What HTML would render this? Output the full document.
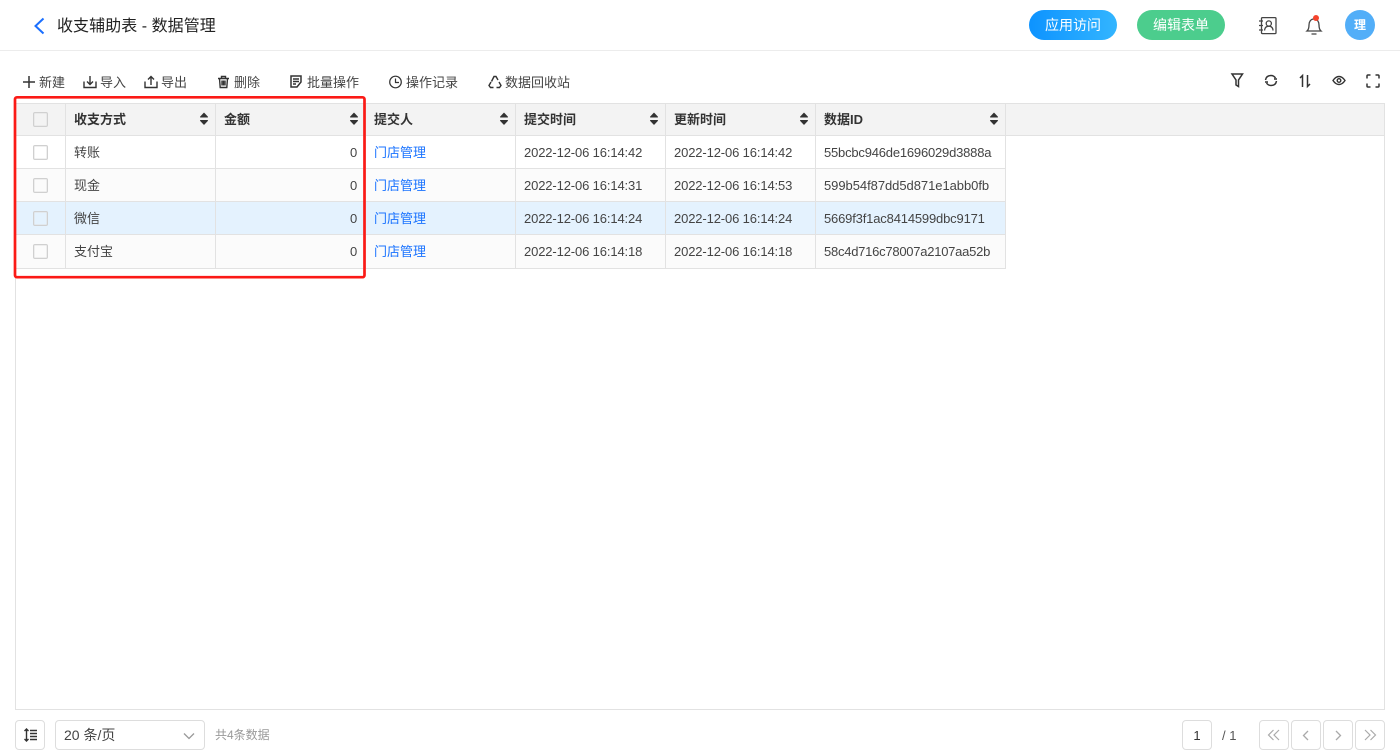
<!DOCTYPE html>
<html lang="zh-CN"><head><meta charset="utf-8"><title>收支辅助表 - 数据管理</title>
<style>
*{box-sizing:border-box;margin:0;padding:0}
html,body{width:1400px;height:755px;overflow:hidden;background:#fff}
body{position:relative;font-family:"Liberation Sans","Noto Sans CJK SC",sans-serif;font-size:13px;color:#333}
.a{position:absolute;white-space:nowrap}
svg{position:absolute;overflow:visible}
.tb{top:74px;line-height:18px;color:#444}
.r{position:absolute;left:15px;width:991px;border-bottom:1px solid #e2e2e2}
.c{position:absolute;top:103px;width:1px;height:166px;background:#e2e2e2}
.cb{position:absolute;left:33px;width:15px;height:15px;border:1px solid #d0d0d0;border-radius:2px;background:transparent;box-shadow:inset 0 0 0 .5px #e0e0e0}
.th{top:111px;line-height:18px;font-weight:700;color:#333}
.td{line-height:18px;color:#444}
.num{letter-spacing:-.13px}
.lnk{color:#1a73ff}
.btn{position:absolute;top:720px;height:30px;border:1px solid #ddd;border-radius:4px;background:#fff}
</style></head><body>

<svg style="left:33px;top:17px" width="14" height="18" fill="none" stroke="#1a6fff" stroke-width="2"><path d="M10.500 1.500L2.500 9l8 7.500"/></svg>
<div class="a" style="left:57px;top:16px;font-size:16px;line-height:22px;color:#222;letter-spacing:.05px">收支辅助表 - 数据管理</div>

<div class="a" style="left:1029px;top:10px;width:88px;height:30px;border-radius:15px;background:linear-gradient(90deg,#0d93ff,#33b5ff);color:#fff;font-size:14px;line-height:30px;text-align:center">应用访问</div>
<div class="a" style="left:1137px;top:10px;width:88px;height:30px;border-radius:15px;background:#4ccd8d;color:#fff;font-size:14px;line-height:30px;text-align:center">编辑表单</div>

<svg style="left:1259px;top:17px" width="18" height="18" fill="none" stroke="#444" stroke-width="1.300"><rect x="2.500" y="0.600" width="14.500" height="16" rx="1"/><circle cx="9.800" cy="6.500" r="2.600"/><path d="M5.500 13.500c.3-3 2-4.300 4.300-4.300s4 1.300 4.300 4.300M0 4h4M0 8.500h4M0 13h4"/></svg>
<svg style="left:1306px;top:15px" width="16" height="21" fill="none" stroke="#444" stroke-width="1.300"><path d="M1 16h14c-1.700-1.500-2-3-2-6 0-3-1.500-6-5-6s-5 3-5 6c0 3-.3 4.500-2 6zM5.500 19h5"/><circle cx="10" cy="3" r="3" fill="#f5432c" stroke="none"/></svg>
<div class="a" style="left:1345px;top:10px;width:30px;height:30px;border-radius:50%;background:#52aef8;color:#fff;font-size:12px;font-weight:700;line-height:30px;text-align:center">理</div>
<div class="a" style="left:0;top:50px;width:1400px;height:1px;background:#ececec"></div>

<svg style="left:22px;top:75px" width="14" height="14" stroke="#333" stroke-width="1.500" fill="none"><path d="M7 1v12M1 7h12"/></svg>
<div class="a tb" style="left:39px">新建</div>
<svg style="left:83px;top:75px" width="14" height="14" stroke="#333" stroke-width="1.400" fill="none"><path d="M1 6.500V12.500H13V6.500M7 1v8M4 6.500l3 3 3-3"/></svg>
<div class="a tb" style="left:100px">导入</div>
<svg style="left:144px;top:75px" width="14" height="14" stroke="#333" stroke-width="1.400" fill="none"><path d="M1 6.500V12.500H13V6.500M7 10V2M4 4.500l3-3 3 3"/></svg>
<div class="a tb" style="left:161px">导出</div>
<svg style="left:217px;top:75px" width="13" height="14" stroke="#333" stroke-width="1.400" fill="none"><path d="M1 3.500h11M4.500 3.500V1.500h4v2M2.500 3.500l.7 9h6.600l.7-9M5 5.500v5M6.500 5.500v5M8 5.500v5"/></svg>
<div class="a tb" style="left:234px">删除</div>
<svg style="left:290px;top:75px" width="13" height="14" stroke="#333" stroke-width="1.500" fill="none"><path d="M1 1h10v6l-4 5H1zM3 4h6M3 6.500h6M3 9h3"/></svg>
<div class="a tb" style="left:307px">批量操作</div>
<svg style="left:389px;top:75px" width="13" height="14" stroke="#333" stroke-width="1.200" fill="none"><circle cx="6.500" cy="7" r="5.800"/><path d="M6.500 3.500V7.500H10"/></svg>
<div class="a tb" style="left:406px">操作记录</div>
<svg style="left:488px;top:75px" width="14" height="14" stroke="#333" stroke-width="1.400" fill="none"><path d="M3.500 6.500l2.500-5h2l2 3.500M11 7l2 3.500-1.500 2H8.500M5.500 12.500H2.500L1 10.500 3 7"/></svg>
<div class="a tb" style="left:505px">数据回收站</div>

<svg style="left:1231px;top:73px" width="13" height="15" stroke="#333" stroke-width="1.500" fill="none"><path d="M1 1h10.500L7.500 7v6.500L5 12V7z"/></svg>
<svg style="left:1264px;top:74px" width="14" height="13" stroke="#333" stroke-width="1.500" fill="none"><path d="M1.500 6c.5-3 2.500-4.500 5.500-4.500 2 0 3.500 1 4.500 2.500M12.500 7c-.5 3-2.500 4.500-5.500 4.500-2 0-3.500-1-4.500-2.500M10 5h3M1 8h3"/></svg>
<svg style="left:1299px;top:74px" width="12" height="14" stroke="#333" stroke-width="1.500" fill="none"><path d="M3.500 13V1.500L1 4M8.500 1v11.500L11 10"/></svg>
<svg style="left:1332px;top:75px" width="14" height="11" stroke="#333" stroke-width="1.400" fill="none"><path d="M1 5.500C3 2.500 5 1.500 7 1.500s4 1 6 4c-2 3-4 4-6 4s-4-1-6-4z"/><circle cx="7" cy="5.500" r="1.800"/></svg>
<svg style="left:1366px;top:74px" width="14" height="14" stroke="#333" stroke-width="1.500" fill="none"><path d="M1 4.500V2a1 1 0 0 1 1-1h2.500M9.500 1H12a1 1 0 0 1 1 1v2.500M13 9.500V12a1 1 0 0 1-1 1H9.500M4.500 13H2a1 1 0 0 1-1-1V9.500"/></svg>

<div class="a" style="left:15px;top:103px;width:1370px;height:607px;border:1px solid #e2e2e2"></div>
<div class="a" style="left:16px;top:104px;width:1368px;height:31px;background:#f3f3f3"></div>
<div class="a" style="left:16px;top:136px;width:990px;height:32px;background:#fff"></div>
<div class="a" style="left:16px;top:169px;width:990px;height:32px;background:#fbfbfb"></div>
<div class="a" style="left:16px;top:202px;width:990px;height:32px;background:#e4f2fe"></div>
<div class="a" style="left:16px;top:235px;width:990px;height:33px;background:#fbfbfb"></div>
<div class="a" style="left:15px;top:135px;width:1370px;height:1px;background:#e2e2e2"></div>
<div class="r" style="top:168px"></div><div class="r" style="top:201px"></div><div class="r" style="top:234px"></div><div class="r" style="top:268px"></div>
<div class="c" style="left:65px"></div><div class="c" style="left:215px"></div><div class="c" style="left:365px"></div><div class="c" style="left:515px"></div><div class="c" style="left:665px"></div><div class="c" style="left:815px"></div><div class="c" style="left:1005px"></div>

<div class="cb" style="top:112px"></div><div class="cb" style="top:145px"></div><div class="cb" style="top:178px"></div><div class="cb" style="top:211px"></div><div class="cb" style="top:244px"></div>

<div class="a th" style="left:74px">收支方式</div>
<div class="a th" style="left:224px">金额</div>
<div class="a th" style="left:374px">提交人</div>
<div class="a th" style="left:524px">提交时间</div>
<div class="a th" style="left:674px">更新时间</div>
<div class="a th" style="left:824px">数据ID</div>
<svg style="left:199px;top:112px" width="10" height="14" fill="#333" stroke="#333" stroke-linejoin="round"><path d="M1.500 5L5 1.200 8.500 5zM1.500 8.500h7L5 12.300z"/></svg>
<svg style="left:349px;top:112px" width="10" height="14" fill="#333" stroke="#333" stroke-linejoin="round"><path d="M1.500 5L5 1.200 8.500 5zM1.500 8.500h7L5 12.300z"/></svg>
<svg style="left:499px;top:112px" width="10" height="14" fill="#333" stroke="#333" stroke-linejoin="round"><path d="M1.500 5L5 1.200 8.500 5zM1.500 8.500h7L5 12.300z"/></svg>
<svg style="left:649px;top:112px" width="10" height="14" fill="#333" stroke="#333" stroke-linejoin="round"><path d="M1.500 5L5 1.200 8.500 5zM1.500 8.500h7L5 12.300z"/></svg>
<svg style="left:799px;top:112px" width="10" height="14" fill="#333" stroke="#333" stroke-linejoin="round"><path d="M1.500 5L5 1.200 8.500 5zM1.500 8.500h7L5 12.300z"/></svg>
<svg style="left:989px;top:112px" width="10" height="14" fill="#333" stroke="#333" stroke-linejoin="round"><path d="M1.500 5L5 1.200 8.500 5zM1.500 8.500h7L5 12.300z"/></svg>

<div class="a td" style="left:74px;top:144px">转账</div>
<div class="a td" style="left:74px;top:177px">现金</div>
<div class="a td" style="left:74px;top:210px">微信</div>
<div class="a td" style="left:74px;top:243px">支付宝</div>
<div class="a td" style="left:350px;top:144px">0</div>
<div class="a td" style="left:350px;top:177px">0</div>
<div class="a td" style="left:350px;top:210px">0</div>
<div class="a td" style="left:350px;top:243px">0</div>
<div class="a td lnk" style="left:374px;top:144px">门店管理</div>
<div class="a td lnk" style="left:374px;top:177px">门店管理</div>
<div class="a td lnk" style="left:374px;top:210px">门店管理</div>
<div class="a td lnk" style="left:374px;top:243px">门店管理</div>

<div class="a td num" style="left:524px;top:144px">2022-12-06 16:14:42</div>
<div class="a td num" style="left:524px;top:177px">2022-12-06 16:14:31</div>
<div class="a td num" style="left:524px;top:210px">2022-12-06 16:14:24</div>
<div class="a td num" style="left:524px;top:243px">2022-12-06 16:14:18</div>
<div class="a td num" style="left:674px;top:144px">2022-12-06 16:14:42</div>
<div class="a td num" style="left:674px;top:177px">2022-12-06 16:14:53</div>
<div class="a td num" style="left:674px;top:210px">2022-12-06 16:14:24</div>
<div class="a td num" style="left:674px;top:243px">2022-12-06 16:14:18</div>
<div class="a td" style="left:824px;top:144px;letter-spacing:-.2px">55bcbc946de1696029d3888a</div>
<div class="a td" style="left:824px;top:177px;letter-spacing:-.05px">599b54f87dd5d871e1abb0fb</div>
<div class="a td" style="left:824px;top:210px;letter-spacing:-.17px">5669f3f1ac8414599dbc9171</div>
<div class="a td" style="left:824px;top:243px;letter-spacing:-.25px">58c4d716c78007a2107aa52b</div>

<svg style="left:0;top:0" width="400" height="300" fill="none"><rect x="15" y="97.300" width="349.500" height="179.900" rx="2" stroke="#fb1a16" stroke-width="2.700"/></svg>

<div class="btn" style="left:15px;width:30px"></div>
<svg style="left:23px;top:728px" width="15" height="14" stroke="#333" stroke-width="1.400" fill="none"><path d="M3.500 1v12M1.500 3l2-2 2 2M1.500 11l2 2 2-2M7 2.500h7M7 5.500h7M7 8.500h7M7 11.500h7"/></svg>
<div class="btn" style="left:55px;width:150px"></div>
<div class="a" style="left:64px;top:726px;line-height:18px;font-size:14px;color:#444">20 条/页</div>
<svg style="left:183px;top:732px" width="12" height="8" stroke="#999" stroke-width="1.300" fill="none"><path d="M1 1.500l5 5 5-5"/></svg>
<div class="a" style="left:215px;top:726px;font-size:12px;line-height:18px;color:#999">共4条数据</div>

<div class="btn" style="left:1182px;width:30px"></div>
<div class="a" style="left:1182px;top:727px;width:30px;text-align:center;line-height:18px;color:#333">1</div>
<div class="a" style="left:1222px;top:727px;line-height:18px;color:#555">/ 1</div>
<div class="btn" style="left:1259px;width:30px"></div>
<div class="btn" style="left:1291px;width:30px"></div>
<div class="btn" style="left:1323px;width:30px"></div>
<div class="btn" style="left:1355px;width:30px"></div>
<svg style="left:1267px;top:729px" width="14" height="12" stroke="#aaa" stroke-width="1.200" fill="none"><path d="M6.500 1L1.500 6l5 5M12 1L7 6l5 5"/></svg>
<svg style="left:1302px;top:730px" width="8" height="11" stroke="#aaa" stroke-width="1.300" fill="none"><path d="M6 1L1.500 5.500 6 10"/></svg>
<svg style="left:1334px;top:730px" width="8" height="11" stroke="#aaa" stroke-width="1.300" fill="none"><path d="M2 1l4.500 4.500L2 10"/></svg>
<svg style="left:1363px;top:729px" width="14" height="12" stroke="#aaa" stroke-width="1.200" fill="none"><path d="M2 1l5 5-5 5M7.500 1l5 5-5 5"/></svg>
</body></html>
